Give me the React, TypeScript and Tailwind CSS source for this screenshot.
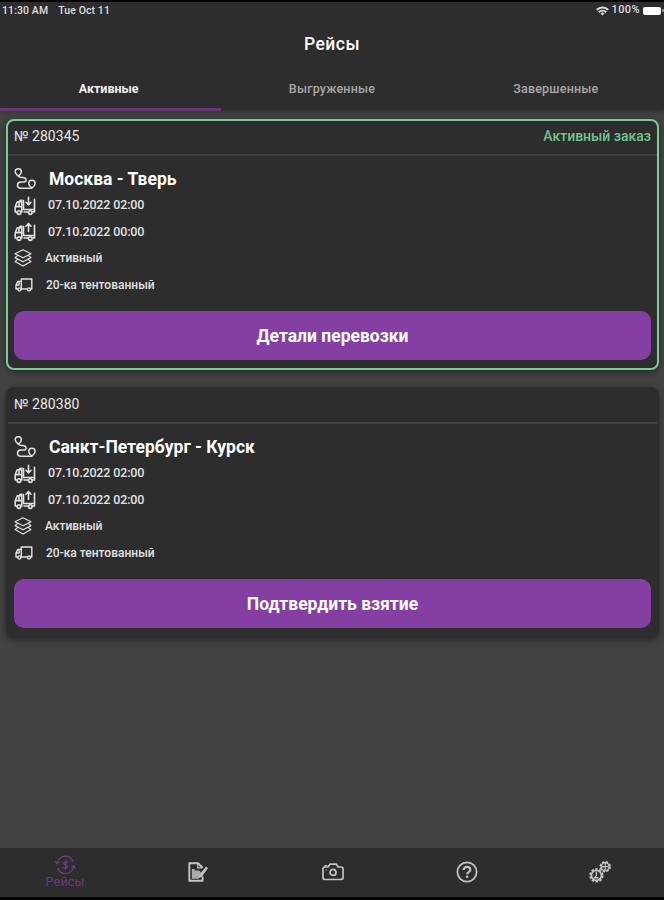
import React from 'react';

interface Trip {
  id: string;
  route: string;
  loading: string;
  unloading: string;
  status: string;
  truck: string;
  action: string;
  current?: boolean;
}

const trips: Trip[] = [
  {
    id: '280345',
    route: 'Москва - Тверь',
    loading: '07.10.2022 02:00',
    unloading: '07.10.2022 00:00',
    status: 'Активный',
    truck: '20-ка тентованный',
    action: 'Детали перевозки',
    current: true,
  },
  {
    id: '280380',
    route: 'Санкт-Петербург - Курск',
    loading: '07.10.2022 02:00',
    unloading: '07.10.2022 02:00',
    status: 'Активный',
    truck: '20-ка тентованный',
    action: 'Подтвердить взятие',
  },
];

const RouteIcon = () => (
  <svg width="22" height="22" viewBox="0 0 22 22" fill="none" stroke="currentColor" strokeWidth="1.5" strokeLinejoin="round" strokeLinecap="round">
    <path d="M4.3 8.2C2.2 6.6 1.2 5.4 1.2 3.8a3.1 3.1 0 0 1 6.2 0c0 1.6-1 2.8-3.1 4.4Z" />
    <path d="M17.9 20c-2.3-1.7-3.2-3-3.2-4.6a3.2 3.2 0 0 1 6.4 0c0 1.6-.9 2.9-3.2 4.6Z" />
    <path d="M4.6 8.5c1.2 1.2 2.6.9 4 .9 4.2 0 4.6 4.4 1.4 4.6H6.8c-4.4.2-4.4 6.2 0 6.2h11" />
  </svg>
);

const TruckLoadIcon = ({ up = false }: { up?: boolean }) => (
  <svg width="22" height="20" viewBox="0 0 22 20" fill="none" stroke="currentColor" strokeWidth="1.6" strokeLinejoin="round" strokeLinecap="round">
    <path d="M3.2 16H1.2v-5l2-5.2h4.6V16h-1M1.6 10.6h6.2M5 5.8v4.8M8 4.2H6.4L5 5.8" />
    <path d="M9.5 4.5v9h11V3.2M10 16h4.2M18.4 16h2.1v-2.5" />
    <circle cx="5" cy="16.6" r="1.8" />
    <circle cx="16.3" cy="16.6" r="1.8" />
    {up ? <path d="M14.5 9.5V1.6m-2.5 2.6 2.5-2.6L17 4.2" /> : <path d="M14.5 1.2v7.7m-2.5-2.6 2.5 2.6L17 6.3" />}
  </svg>
);

const LayersIcon = () => (
  <svg width="18" height="18" viewBox="0 0 18 18" fill="none" stroke="currentColor" strokeWidth="1.2" strokeLinejoin="round" strokeLinecap="round">
    <path d="m9 .8 8 4-8 4-8-4 8-4Z" />
    <path d="m3.8 6.4-2.8 2.2 8 4.2 8-4.2-2.8-2.2" />
    <path d="M3.8 10.4 1 12.6l8 4.5 8-4.5-2.8-2.2" />
  </svg>
);

const TruckIcon = () => (
  <svg width="18" height="14" viewBox="0 0 18 14" fill="none" stroke="currentColor" strokeWidth="1.4" strokeLinejoin="round" strokeLinecap="round">
    <path d="M6.3 11V1h10.5v10h-1M12.2 11H6M2.8 11H1V7l1.8-3.6h3.5M1.3 7h2.8V3.6" />
    <circle cx="4.4" cy="11.4" r="1.5" />
    <circle cx="14" cy="11.4" r="1.5" />
  </svg>
);

const TripsIcon = () => (
  <svg width="21" height="20" viewBox="0 0 21 20" fill="none" stroke="currentColor" strokeWidth="1.4" strokeLinecap="round">
    <path d="M2.2 8.4C3 4.2 6.3 1.3 10.3 1.3c3.5 0 6.3 1.9 7.6 4.8M18.8 11c-.7 4.4-4.1 7.6-8.2 7.6-3.5 0-6.4-2-7.7-5" />
    <path d="m.8 6.7 1.3 2 2-1.2M20.2 13l-1.3-2-2.1 1.2" />
    <path d="M12.7 7.6c-.6-1-4.3-1.2-4.3.7s4.3 1.2 4.3 3.2-3.8 1.8-4.5.6M10.5 5.5v9" />
  </svg>
);

const WaybillIcon = () => (
  <svg width="20" height="20" viewBox="0 0 20 20" fill="none" stroke="currentColor" strokeWidth="1.9" strokeLinejoin="round">
    <path d="M14.6 14.5v4.2H1.3V1.3h8.8l4.5 4.4" />
    <path d="M9.8 1.4v4.4h4.2" strokeWidth="1.3" />
    <path d="M3.8 6.9h3v1.5h4.5l1.4 1.6-1.8 6.7H3.8Z" fill="#a8a8a8" stroke="none" />
    <path d="m18.2 4.6-6.8 8-.8 3.3 3.2-1.2 6.1-8.4Z" fill="currentColor" stroke="none" />
  </svg>
);

const CameraIcon = () => (
  <svg width="22" height="18" viewBox="0 0 22 18" fill="none" stroke="currentColor" strokeWidth="1.7" strokeLinejoin="round">
    <path d="M3 4h3.2l1.7-2.8h6.5L16 4h3c1.3 0 2 .7 2 2v8.5c0 1.3-.7 2-2 2H3c-1.3 0-2-.7-2-2V6c0-1.3.7-2 2-2Z" />
    <path d="M3 3.8V2.6h2.2M3.8 6.8h1" strokeWidth="1.2" />
    <circle cx="11" cy="9.4" r="3" />
  </svg>
);

const HelpIcon = () => (
  <svg width="22" height="22" viewBox="0 0 22 22" fill="none" stroke="currentColor" strokeWidth="1.8">
    <circle cx="11" cy="11" r="9.6" />
    <path d="M7.8 8.9c0-4.1 6.5-4 6.5 0 0 2.2-3.2 2.2-3.2 4.4" strokeWidth="2.2" />
    <circle cx="11.1" cy="15.8" r="1.3" fill="currentColor" stroke="none" />
  </svg>
);

const GearsIcon = () => (
  <svg width="22" height="22" viewBox="0 0 22 22" fill="none" stroke="currentColor">
    <circle cx="7.4" cy="14.4" r="6.3" strokeWidth="1.7" strokeDasharray="2.5 1.46" />
    <circle cx="7.4" cy="14.4" r="5" strokeWidth="1.7" />
    <path d="M7.4 10.8v3.8l-2 2.2h4.2" strokeWidth="1.4" />
    <circle cx="16.2" cy="5.7" r="5" strokeWidth="1.5" strokeDasharray="2.4 1.53" />
    <circle cx="16.2" cy="5.7" r="3.9" strokeWidth="1.5" />
    <path d="M16.2 2.3v6.8M12.8 5.7h6.8" strokeWidth="1.2" />
  </svg>
);

const StatusBar = () => (
  <div className="flex h-[17px] items-center justify-between pl-[2px] text-[10.5px] font-medium text-[#dedede]">
    <div className="flex gap-[10px] tracking-[0.1px]">
      <span>11:30 AM</span>
      <span>Tue Oct 11</span>
    </div>
    <div className="flex items-center gap-[3px]">
      <svg width="13" height="10" viewBox="0 0 13 10" fill="none" stroke="currentColor" strokeWidth="2">
        <path d="M.8 3.8c3.2-3.2 8.2-3.2 11.4 0M2.8 6.2c2.1-2 5.3-2 7.4 0" />
        <path d="m6.5 9.6-2-2a2.8 2.8 0 0 1 4 0Z" fill="currentColor" stroke="none" />
      </svg>
      <span className="text-[11px] tracking-[0.4px]">100%</span>
      <div className="h-[8px] w-[18px] rounded-[2px] bg-white" />
      <div className="-ml-[2px] h-[3px] w-[2px] bg-[#8a8a8a]" />
    </div>
  </div>
);

const TripCard: React.FC<{ trip: Trip }> = ({ trip }) => {
  return (
    <article
      className={
        trip.current
          ? 'h-[251px] rounded-[8px] border-2 border-[#7acb98] bg-[#2d2d2d] shadow-[0_2px_6px_rgba(0,0,0,0.4)]'
          : 'h-[251px] rounded-[8px] border-2 border-[#2d2d2d] bg-[#2d2d2d] shadow-[0_2px_6px_rgba(0,0,0,0.4)]'
      }
    >
      <div className="flex h-[35px] items-center justify-between border-b-2 border-[#404040] px-[6px] pb-[3px]">
        <span className="text-[14px] tracking-[0.05px] text-[#e8e8e8]">№ {trip.id}</span>
        {trip.current && <span className="text-[14px] font-medium text-[#73c391]">Активный заказ</span>}
      </div>
      <div className="px-[6px] pt-[10px] text-[#e2e2e2]">
        <div className="flex h-[26px] items-center">
          <div className="w-[35px]"><RouteIcon /></div>
          <h2 className="text-[17.5px] font-bold text-white">{trip.route}</h2>
        </div>
        <div className="flex h-[27px] items-center text-[12.5px] font-medium tracking-[-0.15px]">
          <div className="w-[34px]"><TruckLoadIcon /></div>
          {trip.loading}
        </div>
        <div className="flex h-[26px] items-center text-[12.5px] font-medium tracking-[-0.15px]">
          <div className="w-[34px]"><TruckLoadIcon up /></div>
          {trip.unloading}
        </div>
        <div className="flex h-[26px] items-center text-[12px] font-medium">
          <div className="w-[31px]"><LayersIcon /></div>
          {trip.status}
        </div>
        <div className="flex h-[27px] items-center text-[12px] font-medium">
          <div className="w-[32px] pl-[1px]"><TruckIcon /></div>
          {trip.truck}
        </div>
        <button className="mt-[13px] flex h-[49px] w-full items-center justify-center rounded-[10px] bg-[#853fa3] pt-[2px] text-[17.5px] font-bold text-white">
          {trip.action}
        </button>
      </div>
    </article>
  );
};

const App = () => {
  return (
    <div className="flex h-[900px] w-[664px] flex-col overflow-hidden border-t-2 border-b-[3px] border-black bg-[#424242] font-['Roboto','Noto_Sans',sans-serif]">
      <header className="flex h-[108px] shrink-0 flex-col bg-[#2d2d2d] shadow-[0_1px_4px_rgba(0,0,0,0.35)]">
        <StatusBar />
        <h1 className="flex h-[50px] items-center justify-center pt-[1px] text-[17.5px] font-medium tracking-[0.5px] text-white">Рейсы</h1>
        <nav className="grid h-[41px] grid-cols-3 text-center text-[12.5px] font-medium leading-[39px] text-[#a6a6a6]">
          <span className="border-b-[3px] border-[#683777] pr-[4px] font-bold text-[#f0f0f0]">Активные</span>
          <span className="tracking-[0.2px]">Выгруженные</span>
          <span className="pl-[5px] tracking-[0.2px]">Завершенные</span>
        </nav>
      </header>

      <main className="flex flex-1 flex-col gap-[17px] pt-[9px] pr-[5px] pl-[6px]">
        {trips.map((trip) => (
          <TripCard key={trip.id} trip={trip} />
        ))}
      </main>

      <footer className="grid h-[49px] shrink-0 grid-cols-[130px_136px_133px_136px_1fr] items-center justify-items-center bg-[#2d2d2d] pb-[2px] text-[#c4c4c4]">
        <div className="flex flex-col items-center pt-[1px] text-[#713983]">
          <TripsIcon />
          <span className="text-[12.5px] leading-[14px] tracking-[0.2px]">Рейсы</span>
        </div>
        <WaybillIcon />
        <CameraIcon />
        <HelpIcon />
        <GearsIcon />
      </footer>
    </div>
  );
};

export default App;
